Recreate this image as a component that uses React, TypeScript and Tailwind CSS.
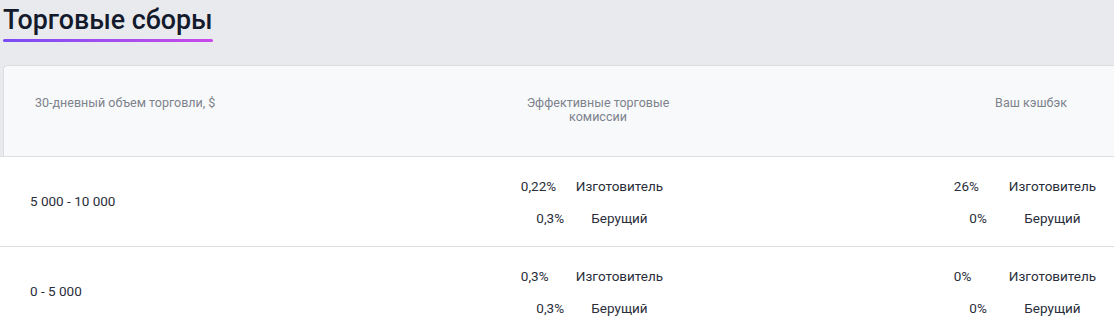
import React from "react";

type Line = { v: string; l: string };
type Row = { range: string; fees: Line[]; cash: Line[] };

const rows: Row[] = [
  {
    range: "5 000 - 10 000",
    fees: [
      { v: "0,22%", l: "Изготовитель" },
      { v: "0,3%", l: "Берущий" },
    ],
    cash: [
      { v: "26%", l: "Изготовитель" },
      { v: "0%", l: "Берущий" },
    ],
  },
  {
    range: "0 - 5 000",
    fees: [
      { v: "0,3%", l: "Изготовитель" },
      { v: "0,3%", l: "Берущий" },
    ],
    cash: [
      { v: "0%", l: "Изготовитель" },
      { v: "0%", l: "Берущий" },
    ],
  },
];

function Pairs({ lines }: { lines: Line[] }) {
  return (
    <div className="flex flex-col items-center">
      {lines.map((ln, i) => (
        <div key={i} className="flex h-8 items-center leading-8">
          <span className="w-[55px]">{ln.v}</span>
          <span>{ln.l}</span>
        </div>
      ))}
    </div>
  );
}

export default function App() {
  return (
    <div
      className="min-h-[335px] w-[1114px] overflow-hidden bg-[#e9eaee]"
      style={{ fontFamily: "Roboto, 'Noto Sans', sans-serif" }}
    >
      <div className="pl-[3px] pt-[3px]">
        <div className="inline-block">
          <h1 className="text-[26.8px] font-medium leading-[34px] text-[#121a2b]">Торговые сборы</h1>
          <div className="mt-[2px] h-[3px] rounded-full bg-gradient-to-r from-[#7a4bf4] to-[#c84ae9]" />
        </div>
      </div>

      <div className="mt-[23px]">
        <div className="border-b border-[#dcdde1] pl-[3px]">
          <div className="grid h-[91px] grid-cols-[420px_344px_172px_178px] rounded-tl-[5px] border-l border-t border-[#dcdde1] bg-[#f8f9fb] pl-[2px] pt-[30px] text-[12.5px] leading-[14px] text-[#7d828c]">
            <div className="pl-[29px]">30-дневный объем торговли, $</div>
            <div className="flex justify-center">
              <div className="w-[150px] text-center">Эффективные торговые комиссии</div>
            </div>
            <div />
            <div className="text-center">Ваш кэшбэк</div>
          </div>
        </div>

        <div className="bg-white text-[13.5px] text-[#2a2e3b]">
          {rows.map((r, i) => (
            <div
              key={i}
              className="grid h-[90px] grid-cols-[420px_344px_172px_178px] items-center border-b border-[#dcdde1]"
            >
              <div className="pl-[30px]">{r.range}</div>
              <Pairs lines={r.fees} />
              <div />
              <Pairs lines={r.cash} />
            </div>
          ))}
        </div>
      </div>
    </div>
  );
}
